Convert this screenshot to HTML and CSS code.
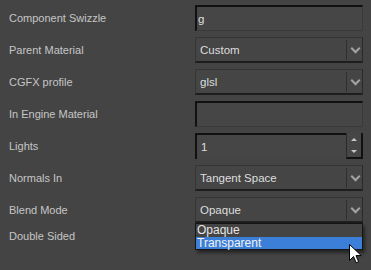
FILE: index.html
```html
<!DOCTYPE html>
<html lang="en">
<head>
<meta charset="UTF-8">
<title>Material Properties</title>
<link rel="stylesheet" href="styles.css">
</head>
<body>

<div class="props">
  <div class="label">Component Swizzle</div>
  <div class="field text">g</div>

  <div class="label">Parent Material</div>
  <div class="field select"><span class="val">Custom</span><span class="arrow"></span></div>

  <div class="label">CGFX profile</div>
  <div class="field select"><span class="val">glsl</span><span class="arrow"></span></div>

  <div class="label">In Engine Material</div>
  <div class="field text"></div>

  <div class="label">Lights</div>
  <div class="field spin">
    <span class="val">1</span>
    <span class="spinner"><i class="up"></i><i class="down"></i></span>
  </div>

  <div class="label">Normals In</div>
  <div class="field select"><span class="val">Tangent Space</span><span class="arrow"></span></div>

  <div class="label">Blend Mode</div>
  <div class="field select open">
    <span class="val">Opaque</span><span class="arrow"></span>
    <div class="list">
      <div class="item">Opaque</div>
      <div class="item sel">Transparent</div>
    </div>
  </div>

  <div class="label last">Double Sided</div>
  <div class="field none"></div>
</div>

<svg class="cursor" width="13" height="20" viewBox="0 0 13 20">
  <path d="M0.5 0.5 L0.5 16.5 L4.5 12.5 L7.2 18.8 L9.6 17.8 L7 11.6 L12.3 11.6 Z" fill="#fff" stroke="#000" stroke-width="1"/>
</svg>

</body>
</html>
```

FILE: styles.css
```css
*{box-sizing:border-box}
body{
  margin:0;
  background:#444;
  font-family:"Liberation Sans", Arial, sans-serif;
  font-size:11px;
  color:#c6c6c6;
  height:270px;
  overflow:hidden;
  position:relative;
}

.props{
  display:grid;
  grid-template-columns:186px 168px;
  grid-template-rows:repeat(7,26px) 14px;
  row-gap:6px;
  padding:5px 0 0 9px;
}
.label{
  align-self:center;
  white-space:nowrap;
}

/* CONTROLS */
.field{
  position:relative;
  display:flex;
  align-items:center;
  color:#dedede;
  font-size:11.5px;
}
.text{
  background:#464646;
  border-top:2px solid #111;
  border-left:2px solid #111;
  border-right:1px solid #3a3a3a;
  border-bottom:1px solid #3a3a3a;
  padding-left:1px;
}
.select{
  background:#454545;
  border:1px solid #353535;
  border-bottom:2px solid #1e1e1e;
  border-right:1px solid #2a2a2a;
}
.select .val{
  flex:1;
  padding-left:4px;
}
.arrow{
  width:16px;
  height:20px;
  border-left:1px solid #303030;
  position:relative;
}
.arrow::after{
  content:"";
  position:absolute;
  left:5px;
  top:5px;
  width:5px;
  height:5px;
  border-right:2px solid #a4a4a4;
  border-bottom:2px solid #a4a4a4;
  transform:rotate(45deg);
}

.spin{
  background:#464646;
  border-top:2px solid #111;
  border-left:2px solid #111;
}
.spin .val{
  flex:1;
  padding-left:4px;
}
.spinner{
  width:17px;
  align-self:stretch;
  margin-top:-2px;
  background:#464646;
  border-left:1px solid #2a2a2a;
  border-right:2px solid #111;
  border-bottom:2px solid #111;
  display:flex;
  flex-direction:column;
  justify-content:space-around;
  align-items:center;
}
.spinner i{
  width:0;
  height:0;
  border-left:3px solid transparent;
  border-right:3px solid transparent;
}
.spinner .up{border-bottom:3px solid #c8c8c8}
.spinner .down{border-top:3px solid #c8c8c8}

.none{background:none}

/* DROPDOWN LIST */
.list{
  position:absolute;
  left:-1px;
  right:-1px;
  top:25px;
  background:#444;
  border:1px solid #151515;
  box-shadow:2px 3px 3px rgba(0,0,0,.45);
  z-index:2;
}
.item{
  height:12.5px;
  line-height:12px;
  padding-left:1px;
  font-size:12px;
  color:#e6e6e6;
}
.item.sel{
  background:#3b7fd9;
  color:#f2f2f2;
}

.cursor{
  position:absolute;
  left:349px;
  top:244px;
  z-index:3;
}
```
